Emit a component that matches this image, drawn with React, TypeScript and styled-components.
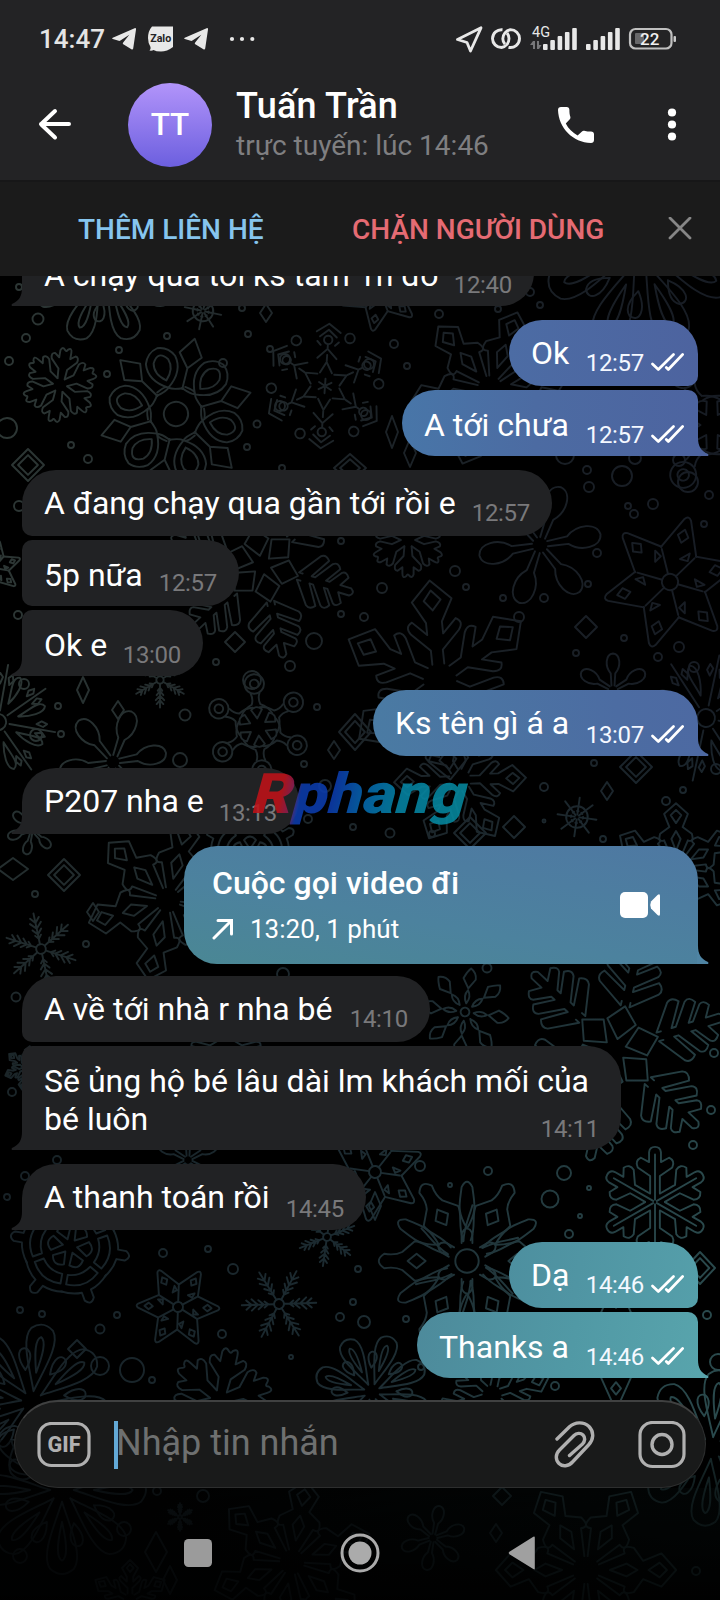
import React from "react";
import styled, { createGlobalStyle, css } from "styled-components";

const GlobalStyle = createGlobalStyle`
  * { box-sizing: border-box; }
  html, body { margin: 0; padding: 0; background: #000; }
  body { font-family: Roboto, "Noto Sans", sans-serif; color: #fff; }
  svg { display: block; flex: none; }
`;

const Screen = styled.main`
  position: relative;
  width: 720px;
  height: 1600px;
  overflow: hidden;
  background: #000;
  display: flex;
  flex-direction: column;
`;

/* ---------- top area ---------- */

const Top = styled.header`
  position: relative;
  flex: none;
  height: 180px;
  background: #232325;
  display: flex;
  flex-direction: column;
`;

const StatusBar = styled.div`
  height: 77px;
  padding: 0 44px 0 39px;
  display: flex;
  align-items: center;
  color: #e8e8e8;
`;

const Clock = styled.span`
  font-size: 26px;
  line-height: 30px;
  font-weight: 500;
  width: 73px;
  color: #e4e4e4;
`;

const StatusIcons = styled.div<{ $push?: boolean }>`
  display: flex;
  align-items: center;
  margin-left: ${(p) => (p.$push ? "auto" : "0")};
`;

const ZaloIcon = styled.svg`
  margin: 0 11px 0 12px;
`;

const MoreDots = styled.svg`
  margin-left: 21px;
`;

const TitleRow = styled.div`
  height: 96px;
  display: flex;
  align-items: center;
  padding: 0 24px 0 31px;
`;

const Avatar = styled.div`
  width: 84px;
  height: 84px;
  margin-left: 49px;
  padding-bottom: 2px;
  border-radius: 50%;
  background: linear-gradient(#b294fa, #6c5fdf);
  display: flex;
  align-items: center;
  justify-content: center;
  font-size: 31.5px;
  font-weight: 500;
`;

const Person = styled.div`
  margin-left: 24px;
  flex: 1;
  white-space: nowrap;
`;

const PersonName = styled.div`
  font-size: 36px;
  line-height: 40px;
  font-weight: 500;
  letter-spacing: 0.2px;
`;

const PersonState = styled.div`
  font-size: 28px;
  line-height: 34px;
  margin-top: 3px;
  padding-bottom: 1px;
  color: #7f7f81;
`;

const MenuDots = styled.svg`
  margin-left: 48px;
`;

const ActionBar = styled.nav`
  position: relative;
  flex: none;
  height: 96px;
  background: #1b1b1b;
  display: flex;
  align-items: center;
  padding: 0 28px 0 78px;
  border-top: 2px solid #171718;
`;

const Action = styled.button<{ $color: string; $width: number }>`
  border: 0;
  padding: 2px 0 0;
  background: none;
  text-align: left;
  font: 500 28px/34px Roboto, sans-serif;
  white-space: nowrap;
  color: ${(p) => p.$color};
  width: ${(p) => p.$width}px;
`;

const CloseIcon = styled.svg`
  margin-left: auto;
`;

/* ---------- wallpaper ---------- */

const Wallpaper = styled.svg`
  position: absolute;
  left: 0;
  top: 276px;
`;

const K = "non-scaling-stroke";

type Kind =
  | "chunk" | "branch" | "loops" | "filigree" | "dashes" | "fishbone" | "squares" | "knobs"
  | "petals" | "feather" | "star" | "burst" | "wheel" | "helm" | "kites" | "grand" | "clover";

interface Arm {
  n: number;
  d: string;
  /** drawn half a step between two arms */
  between?: string;
  dots?: [number, number, number][];
  core?: number;
}

const arms: Record<Kind, Arm> = {
  chunk: {
    n: 6,
    d: "M-9-16L-11-40L-32-62Q-36-76-26-77L-14-68V-86Q-10-98-2-88Q2-84 4-90Q14-98 14-84V-68L26-77Q36-76 32-62L11-40L9-16",
  },
  branch: {
    n: 6,
    d: "M0-4V-88M-9-16V-48L-32-64Q-38-76-26-82L-11-74V-92Q-10-102 0-102Q10-102 11-92V-74L26-82Q38-76 32-64L9-48V-16",
  },
  loops: {
    n: 6,
    core: 16,
    d: "M-18-30Q-4-32 0-36Q4-32 18-30M-16-34Q-3-40 0-36Q-24-52-20-74Q-14-88 0-90Q14-88 20-74Q24-52 0-36M0-46Q-14-58-10-72Q0-88 10-72Q14-58 0-46",
    between: "M0-34V-62M0-62L-15-80L0-102L15-80Z",
  },
  filigree: {
    n: 6,
    core: 13,
    d: "M-6-20V-30Q-4-36 0-36Q4-36 6-30V-20M0-36C12-56 8-64 6-82Q0-94-6-82C-8-64-12-56 0-36M-4-22C-3-40 3-50 6-62",
    between: "M-8-22C-10-38-22-48-22-58L-10-72Q-6-80-8-92Q0-104 8-92Q6-80 10-72L22-58C22-48 10-38 8-22M0-46L-8-56L0-66L8-56Z",
  },
  dashes: {
    n: 6,
    d: "M0-2V-12M-10-22L0-40L10-22M-16-46L0-62L16-46M0-52V-42M-20-90L0-104L20-90M-14-82L0-94L14-82M-12-68L-18-74M12-68L18-74M0-62V-68",
    dots: [[0, -77, 7], [36, -82, 8]],
  },
  fishbone: {
    n: 6,
    d: "M0-10L-13-26L0-40L13-26ZM-4-44V-40L-27-57Q-31-62-25-67L-4-54V-58L-23-72Q-27-77-20-81L-4-70V-74L-17-84Q-20-88-14-92L-4-86V-98Q0-104 4-98V-86L14-92Q20-88 17-84L4-74V-70L20-81Q27-77 23-72L4-58V-54L25-67Q31-62 27-57L4-40V-44",
  },
  squares: {
    n: 6,
    d: "M-6-16L-6-30L-24-48Q-30-56-22-60L-8-46V-58L-20-80L0-100L20-80L8-58V-46L22-60Q30-56 24-48L6-30V-16M-8-80L0-90L9-80L0-70Z",
  },
  grand: {
    n: 6,
    d: "M-6-14L-18-42Q-28-38-24-52L-10-62L-18-82L0-98L18-82L10-62L24-52Q28-38 18-42L6-14M0-68L-8-80L0-88L8-80ZM0-26L-7-44L0-56L7-44Z",
  },
  knobs: {
    n: 6,
    d: "M-8-62Q-4-52-8-42Q-22-36-28-24M8-62Q4-52 8-42Q22-36 28-24M0-16L-10-32Q0-42 10-32Z",
    dots: [[0, -80, 18], [0, -80, 8]],
  },
  petals: {
    n: 8,
    d: "M0-14C-8-40-26-78-14-94Q0-106 14-94C26-78 8-40 0-14M0-38C-5-60-8-80 0-84C8-80 5-60 0-38M18-38C18-60 30-68 36-58C38-48 28-42 18-38",
  },
  feather: {
    n: 6,
    core: 13,
    d: "M0-14V-98M0-40L-12-54M0-40L12-54M0-56L-15-72M0-56L15-72M0-72L-12-86M0-72L12-86M0-28L-8-38M0-28L8-38",
  },
  star: {
    n: 6,
    core: 12,
    d: "M-27-46L-5-95Q0-102 5-95L27-46M0-60L-8-70L0-80L8-70Z",
    between: "M0-12V-50M-10-50L-14-34L-4-40Z",
  },
  burst: {
    n: 8,
    core: 14,
    d: "M0-20V-100M12-34C14-60 10-80 24-82C34-74 24-50 12-34M-8-66L-14-74L-11-84L-5-78ZM8-66L14-74L11-84L5-78Z",
  },
  wheel: { n: 8, core: 54, d: "M0-12V-50M0-60V-98M-4-30H4" },
  helm: {
    n: 6,
    d: "M-40-66Q-24-78-8-80V-94Q0-106 8-94V-80Q24-78 40-66M-28-58Q0-76 28-58L20-44Q0-54-20-44ZM0-12L-12-30Q0-44 12-30Z",
  },
  kites: {
    n: 8,
    core: 10,
    d: "M0-20Q-10-36 0-50Q10-36 0-20M0-54L-14-76Q-8-92 0-100Q14-92 14-76Z",
  },
  clover: { n: 6, d: "M-4-12L-6-44C-22-62-20-94 0-96C20-94 22-62 6-44L4-12" },
};

const flakes: [Kind, number, number, number, number][] = [
  ["petals", 103, 270, 74, 22], ["wheel", 203, 311, 19, 12], ["chunk", 60, 385, 40, 10], ["loops", 176, 414, 76, -16],
  ["dashes", 325, 386, 60, 4], ["grand", 490, 388, 82, 20], ["petals", 640, 250, 98, 22], ["knobs", 712, 425, 72, 30],
  ["fishbone", 262, 565, 94, 47], ["star", -6, 568, 28, 10], ["clover", 540, 545, 64, 20], ["star", 670, 582, 68, 16],
  ["chunk", 408, 540, 40, 0], ["squares", 440, 680, 100, -6], ["clover", 613, 690, 38, 0], ["star", 380, 290, 42, 10],
  ["burst", 706, 718, 64, 12], ["burst", -2, 722, 58, 10], ["feather", 160, 680, 28, 0], ["knobs", 258, 727, 54, -5],
  ["clover", 113, 762, 56, 20], ["grand", 168, 900, 84, 14], ["feather", 41, 949, 37, -12], ["wheel", 577, 817, 20, 8],
  ["grand", 676, 868, 66, 0], ["kites", 465, 1012, 44, 8], ["fishbone", 615, 1050, 112, 13], ["squares", 460, 780, 66, 28],
  ["clover", 32, 830, 26, 14], ["helm", 250, 855, 50, 0], ["squares", 226, 1040, 55, 0],
  ["helm", 70, 1246, 60, 40], ["star", 178, 1307, 42, -28], ["feather", 279, 1304, 38, 28], ["feather", 327, 1237, 30, 8],
  ["branch", 655, 1202, 54, 0], ["filigree", 467, 1261, 90, 0], ["star", 375, 1172, 50, 8], ["clover", 188, 1160, 35, 0],
  ["petals", 32, 1402, 78, 8], ["chunk", 220, 1400, 56, 12], ["petals", 372, 1392, 58, 18], ["star", 616, 1345, 62, 0],
  ["squares", 492, 1395, 60, 12], ["petals", 712, 1448, 78, 6], ["petals", 62, 1490, 84, 0], ["feather", 180, 1517, 14, 0],
  ["grand", 292, 1562, 84, 10], ["clover", 433, 1538, 34, 12], ["grand", 586, 1570, 92, 30], ["squares", 130, 1600, 40, 0],
  ["squares", 26, 1068, 22, 10],
];

const rings: [number, number, number][] = [
  [19, 287, 3], [38, 319, 5.5], [26, 338, 4], [9, 361, 4], [119, 350, 3], [167, 336, 3], [107, 374, 3], [223, 363, 4],
  [242, 308, 3], [248, 334, 3], [270, 349, 3], [285, 359, 5], [280, 406, 5], [257, 424, 3.5], [247, 447, 3], [71, 445, 3],
  [88, 459, 4], [7, 428, 10], [282, 468, 3], [19, 506, 5], [18, 615, 4], [314, 641, 8], [290, 666, 5], [216, 662, 3],
  [341, 541, 3], [341, 614, 3], [252, 680, 9], [530, 292, 4], [540, 305, 3], [439, 314, 4], [498, 309, 3], [394, 344, 4],
  [369, 364, 5], [407, 366, 3], [366, 415, 5], [565, 455, 9], [587, 470, 4], [589, 487, 5], [622, 476, 10], [635, 458, 6],
  [688, 482, 10], [679, 460, 6], [653, 504, 5], [628, 506, 3], [634, 514, 4], [709, 495, 4], [704, 524, 3], [455, 571, 5],
  [466, 587, 3], [382, 588, 5], [503, 598, 3], [544, 598, 4], [519, 617, 5], [597, 553, 4], [588, 584, 3], [364, 617, 4],
  [624, 638, 3], [576, 653, 3], [679, 647, 5], [658, 657, 4], [694, 667, 5], [24, 684, 5], [58, 706, 3], [61, 734, 3],
  [36, 735, 6], [185, 715, 5.5], [180, 760, 7], [317, 707, 3], [304, 764, 3], [325, 786, 6], [308, 819, 4], [353, 827, 3],
  [35, 894, 3], [86, 944, 3], [16, 997, 4.5], [283, 974, 6], [487, 968, 4.5], [594, 763, 3], [544, 787, 4], [390, 833, 4.5],
  [432, 834, 3], [544, 821, 1.5], [603, 839, 3], [666, 801, 4], [683, 790, 3], [716, 769, 5], [12, 1092, 4], [57, 1160, 4],
  [25, 1176, 4], [7, 1197, 3], [163, 1253, 4], [208, 1249, 3], [233, 1269, 5], [20, 1310, 3], [42, 1314, 3], [117, 1315, 3],
  [100, 1329, 4.5], [222, 1334, 4], [340, 1317, 4], [353, 1302, 3], [358, 1269, 3], [291, 1357, 2], [420, 1166, 5],
  [488, 1171, 4], [450, 1185, 2], [564, 1173, 7], [550, 1199, 8.5], [589, 1188, 2], [580, 1216, 2], [569, 1234, 4],
  [693, 1145, 4], [711, 1110, 4], [714, 1053, 4], [364, 1322, 6], [406, 1319, 3], [707, 1315, 4], [718, 1362, 8],
  [100, 1366, 9], [132, 1370, 12], [421, 1367, 3], [555, 1386, 4], [152, 1380, 3], [203, 1496, 6], [157, 1491, 4],
  [124, 1529, 7], [20, 1556, 7], [696, 1571, 4],
];

const diamonds: [number, number, number, number, boolean][] = [
  [28, 465, 16, 16, true], [350, 468, 16, 14, true], [266, 313, 6, 9, false], [392, 432, 6, 16, false], [410, 453, 6, 14, false],
  [235, 642, 10, 10, false], [586, 627, 11, 11, false], [83, 690, 6, 13, false], [118, 710, 6, 9, false], [334, 750, 6, 9, false],
  [355, 732, 16, 18, true], [13, 869, 15, 11, false], [64, 875, 16, 16, true], [93, 912, 6, 9, false], [470, 833, 16, 16, true],
  [514, 827, 11, 11, false], [636, 767, 16, 16, true], [607, 791, 6, 9, false], [375, 1206, 6, 14, false], [700, 1268, 15, 16, true],
  [77, 1349, 9, 9, false], [156, 1552, 11, 20, false], [170, 1580, 7, 14, false], [496, 1533, 6, 9, false], [502, 1496, 9, 9, false],
];

function Flake({ kind, x, y, r, turn }: { kind: Kind; x: number; y: number; r: number; turn: number }) {
  const arm = arms[kind];
  const step = 360 / arm.n;
  return (
    <g transform={`translate(${x} ${y}) rotate(${turn}) scale(${r / 100})`}>
      {arm.core && <circle r={arm.core} vectorEffect={K} />}
      {Array.from({ length: arm.n }, (_, i) => (
        <g key={i} transform={`rotate(${step * i})`}>
          <path d={arm.d} vectorEffect={K} />
          {arm.between && <path d={arm.between} transform={`rotate(${step / 2})`} vectorEffect={K} />}
          {arm.dots?.map(([cx, cy, cr], j) => <circle key={j} cx={cx} cy={cy} r={cr} vectorEffect={K} />)}
        </g>
      ))}
    </g>
  );
}

function SnowPattern() {
  return (
    <Wallpaper width="720" height="1324" viewBox="0 276 720 1324" aria-hidden="true">
      <defs>
        <linearGradient id="tint" x1="0" y1="0" x2="1" y2="0">
          <stop offset="0" stopColor="#2d3735" />
          <stop offset=".45" stopColor="#1d2428" />
          <stop offset="1" stopColor="#171c24" />
        </linearGradient>
        <linearGradient id="tintLow" x1="0" y1="0" x2="1" y2="0">
          <stop offset="0" stopColor="#172126" />
          <stop offset=".5" stopColor="#1c2b31" />
          <stop offset="1" stopColor="#2a4a4d" />
        </linearGradient>
        <linearGradient id="downward" x1="0" y1="0" x2="0" y2="1">
          <stop offset=".3" stopColor="#000" />
          <stop offset=".68" stopColor="#fff" />
        </linearGradient>
        <linearGradient id="shade" x1="0" y1="0" x2="0" y2="1">
          <stop offset="0" stopColor="#000" stopOpacity=".4" />
          <stop offset=".5" stopColor="#000" stopOpacity=".72" />
          <stop offset="1" stopColor="#000" stopOpacity=".84" />
        </linearGradient>
        <radialGradient id="glow" cx="1" cy=".35" r=".8">
          <stop offset="0" stopColor="#071010" />
          <stop offset="1" stopColor="#020303" />
        </radialGradient>
        <mask id="lower" maskUnits="userSpaceOnUse" x="0" y="276" width="720" height="1324">
          <rect y="276" width="720" height="1324" fill="url(#downward)" />
        </mask>
        <mask id="snow" maskUnits="userSpaceOnUse" x="0" y="276" width="720" height="1324">
          <g fill="none" stroke="#fff" strokeWidth="1.9" strokeLinecap="round" strokeLinejoin="round">
            {flakes.map(([kind, x, y, r, turn], i) => <Flake key={i} kind={kind} x={x} y={y} r={r} turn={turn} />)}
            {rings.map(([x, y, r], i) => <circle key={i} cx={x} cy={y} r={r} />)}
            {diamonds.map(([x, y, w, h, twice], i) => (
              <g key={i}>
                <path d={`M${x} ${y - h}L${x + w} ${y}L${x} ${y + h}L${x - w} ${y}Z`} />
                {twice && <path d={`M${x} ${y - h * 0.62}L${x + w * 0.62} ${y}L${x} ${y + h * 0.62}L${x - w * 0.62} ${y}Z`} />}
              </g>
            ))}
          </g>
        </mask>
      </defs>
      <rect y="1488" width="720" height="112" fill="url(#glow)" />
      <g mask="url(#snow)">
        <rect y="276" width="720" height="1324" fill="url(#tint)" />
        <rect y="276" width="720" height="1324" fill="url(#tintLow)" mask="url(#lower)" />
      </g>
      <rect y="1440" width="720" height="160" fill="url(#shade)" />
    </Wallpaper>
  );
}

/* ---------- messages ---------- */

const Chat = styled.section`
  position: relative;
  flex: none;
  height: 1124px;
  overflow: hidden;
  display: flex;
  flex-direction: column;
  padding: 0 22px;
`;

type Side = "in" | "out";

const Bubble = styled.article<{
  $side: Side; $gap: number; $joinTop?: boolean; $joinBottom?: boolean; $tail?: boolean; $fill: string; $w: number; $h: number;
}>`
  position: relative;
  flex: none;
  display: flex;
  align-items: flex-start;
  width: ${(p) => p.$w}px;
  height: ${(p) => p.$h}px;
  margin-top: ${(p) => p.$gap}px;
  align-self: ${(p) => (p.$side === "in" ? "flex-start" : "flex-end")};
  background: ${(p) => p.$fill};
  padding: ${(p) => (p.$joinTop ? 16 : 14)}px ${(p) => (p.$side === "in" ? 22 : 14)}px 0 22px;
  ${(p) => {
    const top = p.$joinTop ? 10 : 34;
    const bottom = p.$tail ? 0 : p.$joinBottom ? 10 : 34;
    return p.$side === "in"
      ? css`border-radius: ${top}px 33px 33px ${bottom}px;`
      : css`border-radius: 33px ${top}px ${bottom}px 33px;`;
  }}
`;

const TailShape = styled.svg<{ $side: Side }>`
  position: absolute;
  bottom: 0;
  ${(p) => (p.$side === "in" ? "left: -11px;" : "right: -11px; transform: scaleX(-1);")}
`;

const Words = styled.p`
  margin: 0;
  min-width: 0;
  font-size: 32px;
  line-height: 38px;
  white-space: pre;
`;

const Meta = styled.div<{ $side: Side; $tail?: boolean }>`
  margin-left: auto;
  align-self: flex-end;
  display: flex;
  align-items: center;
  gap: 7px;
  font-size: 24px;
  line-height: 28px;
  letter-spacing: -0.3px;
  padding-bottom: ${(p) => (p.$tail ? 7 : 9)}px;
  color: ${(p) => (p.$side === "in" ? "#79797b" : "#f4f8ff")};
`;

function Tail({ side, color }: { side: Side; color: string }) {
  return (
    <TailShape $side={side} width="12" height="18" viewBox="0 0 12 18">
      <path d="M12 0H11C11 8 8 13 1 16Q0 17 1 18H12Z" fill={color} />
    </TailShape>
  );
}

function Ticks() {
  return (
    <svg width="33" height="20" viewBox="0 0 33 20" fill="none" stroke="#fff" strokeWidth="2.7" strokeLinecap="round" strokeLinejoin="round">
      <path d="M1.500 11L7.300 16.500L22.500 1.500M15.300 14.500L17.300 16.500L31.600 1.500" />
    </svg>
  );
}

interface Message {
  side: Side; text: string; time: string; gap: number; w: number; h?: number;
  joinTop?: boolean; joinBottom?: boolean; tail?: boolean; fill?: string; tailColor?: string;
}

function MessageBubble({ m }: { m: Message }) {
  const fill = m.fill ?? "#212224";
  return (
    <Bubble $side={m.side} $gap={m.gap} $joinTop={m.joinTop} $joinBottom={m.joinBottom} $tail={m.tail} $fill={fill} $w={m.w} $h={m.h ?? 66}>
      <Words>{m.text}</Words>
      <Meta $side={m.side} $tail={m.tail}>
        {m.time}
        {m.side === "out" && <Ticks />}
      </Meta>
      {m.tail && <Tail side={m.side} color={m.tailColor ?? fill} />}
    </Bubble>
  );
}

const before: Message[] = [
  { side: "in", text: "A chạy qua tới ks tầm 1h đó", time: "12:40", gap: -36, w: 512, joinTop: true, tail: true },
  { side: "out", text: "Ok", time: "12:57", gap: 14, w: 189, joinBottom: true, fill: "linear-gradient(90deg, #4c6ca4, #4d639f)" },
  { side: "out", text: "A tới chưa", time: "12:57", gap: 4, w: 296, joinTop: true, tail: true, fill: "linear-gradient(90deg, #4876a8, #4c6ba2 45%, #4d64a0)", tailColor: "#4d64a0" },
  { side: "in", text: "A đang chạy qua gần tới rồi e", time: "12:57", gap: 14, w: 530, joinBottom: true },
  { side: "in", text: "5p nữa", time: "12:57", gap: 4, w: 217, joinTop: true, joinBottom: true },
  { side: "in", text: "Ok e", time: "13:00", gap: 4, w: 181, joinTop: true, tail: true },
  { side: "out", text: "Ks tên gì á a", time: "13:07", gap: 14, w: 325, tail: true, fill: "linear-gradient(80deg, #4a7ba3, #4c6ca2 75%, #4d69a2)", tailColor: "#4d69a2" },
  { side: "in", text: "P207 nha e", time: "13:13", gap: 12, w: 277, tail: true },
];

const after: Message[] = [
  { side: "in", text: "A về tới nhà r nha bé", time: "14:10", gap: 12, w: 408, joinBottom: true },
  { side: "in", text: "Sẽ ủng hộ bé lâu dài lm khách mối của\nbé luôn", time: "14:11", gap: 4, w: 599, h: 104, joinTop: true, tail: true },
  { side: "in", text: "A thanh toán rồi", time: "14:45", gap: 14, w: 344, tail: true },
  { side: "out", text: "Dạ", time: "14:46", gap: 12, w: 189, joinBottom: true, fill: "linear-gradient(100deg, #4d8f9f, #559faa)" },
  { side: "out", text: "Thanks a", time: "14:46", gap: 4, w: 281, joinTop: true, tail: true, fill: "linear-gradient(100deg, #4d8a9b, #5199a5 55%, #58a4ac)", tailColor: "#58a4ac" },
];

const CallBody = styled.div`
  flex: 1;
  display: flex;
  flex-direction: column;
  padding: 4px 0 0 6px;
`;

const CallTitle = styled.div`
  font-size: 32px;
  line-height: 38px;
  font-weight: 500;
`;

const CallInfo = styled.div`
  display: flex;
  align-items: center;
  gap: 16px;
  margin-top: 12px;
  font-size: 26px;
  line-height: 30px;
`;

const CallIcon = styled.div`
  align-self: center;
  margin: -14px 24px 0 0;
`;

const BrandStamp = styled.div`
  position: absolute;
  z-index: 3;
  left: 254px;
  top: 762px;
  font: italic 900 56px/64px Roboto, sans-serif;
  transform: scaleX(1.14) skewX(-4deg);
  transform-origin: 0 50%;
  opacity: 0.88;
  background: linear-gradient(97deg, #c01218 0 14%, #8c1c50 19%, #0c3dae 23% 38%, #0568b0 52%, #0585a5 68%, #068a9f);
  background-clip: text;
  -webkit-background-clip: text;
  color: transparent;
`;

/* ---------- bottom area ---------- */

const Composer = styled.form`
  position: relative;
  flex: none;
  height: 88px;
  margin: 0 14px;
  border-radius: 44px;
  border: 1px solid #2d2e2e;
  border-top: 2px solid #404141;
  background: #191a1a;
  display: flex;
  align-items: center;
  padding: 0 19px 0 22px;
`;

const Field = styled.div`
  display: flex;
  align-items: center;
  margin-left: 23px;
  flex: 1;
  white-space: nowrap;
  font-size: 36px;
  line-height: 42px;
  color: #6e7070;
`;

const Caret = styled.span`
  width: 4px;
  height: 48px;
  margin-right: -2px;
  background: #63a9d6;
`;

const Placeholder = styled.span`
  padding-bottom: 4px;
`;

const ClipIcon = styled.svg`
  margin-right: -1px;
`;

const CameraIcon = styled.svg`
  margin-left: 43px;
`;

const NavBar = styled.footer`
  position: relative;
  flex: 1;
  display: flex;
  align-items: center;
  padding: 18px 184px 0;
  justify-content: space-between;
`;

const Plane = () => (
  <svg width="24" height="22" viewBox="0 0 24 22" fill="#e8e8e8">
    <path d="M.8 9.7L22.6.2Q24.2-.2 24 1.4L21.2 20.4Q20.8 22 19.4 21.2L11.3 16.2Q10.4 15.5 11.2 14.6L17.3 6.8L8.4 12.6Q7.6 13.1 6.7 12.8L.8 11.1Q-.4 10.4.8 9.7Z" />
  </svg>
);

const Bars = () => (
  <svg width="34" height="24" viewBox="0 0 34 24" fill="#e8e8e8">
    {[6, 10, 14, 18, 22].map((h, i) => <rect key={h} x={i * 7.3} y={23 - h} width="4.6" height={h} rx="1" />)}
  </svg>
);

export default function App() {
  return (
    <>
      <GlobalStyle />
      <Screen>
        <SnowPattern />
        <Top>
          <StatusBar>
            <Clock>14:47</Clock>
            <StatusIcons>
              <Plane />
              <ZaloIcon width="25" height="26" viewBox="0 0 25 26">
                <path d="M4 .5H25V21Q19 25.500 13 25.500Q8 25.500 5.500 24Q4 25 1.500 24.500Q3 23 2.500 21Q0 17 0 12Q0 5 4 .5Z" fill="#e8e8e8" />
                <text x="12.700" y="16" textAnchor="middle" fontFamily="Roboto" fontWeight="700" fontSize="10.500" textLength="21" lengthAdjust="spacingAndGlyphs" fill="#232325">Zalo</text>
              </ZaloIcon>
              <Plane />
              <MoreDots width="26" height="6" viewBox="0 0 26 6" fill="#e8e8e8">
                <circle cx="3" cy="3" r="2.100" /><circle cx="13" cy="3" r="2.100" /><circle cx="23.300" cy="3" r="2.100" />
              </MoreDots>
            </StatusIcons>
            <StatusIcons $push>
              <svg width="220" height="30" viewBox="456 24 220 30" fill="none" stroke="#e8e8e8">
                <path d="M457.500 39.500L481 27.800L470.500 51L467 42.500Z" strokeWidth="2.800" strokeLinejoin="round" />
                <g strokeWidth="2.900" strokeLinecap="butt">
                  <path d="M502.500 29.800A9 9 0 0 0 492.500 38.500A9 9 0 0 0 501.500 47.500C506 46.800 509 43 509 38.500Q509 35.500 507 33" />
                  <path d="M508.500 47.300A9 9 0 0 0 519.500 38.500A9 9 0 0 0 510.500 29.600C506 30.500 502.800 34.500 502.800 38.800Q502.800 41.800 505 44.200" />
                </g>
                <g stroke="none">
                  <text x="532" y="37" fontFamily="Roboto" fontSize="14.500" fill="#e8e8e8">4G</text>
                  <path d="M533 41V49H535V41ZM530 45L533 41V45ZM537 41V49H539V41ZM539 49L541.500 45H539Z" fill="#77777a" />
                  <g transform="translate(543 27)"><Bars /></g>
                  <g transform="translate(586 27)"><Bars /></g>
                  <rect x="635" y="33" width="9" height="11" rx="1" fill="#68686a" />
                  <rect x="673.500" y="36" width="2.500" height="6" rx="1" fill="#c8c8c8" />
                  <text x="640" y="45" fontFamily="Roboto" fontWeight="500" fontSize="17" fill="#f0f0f0">22</text>
                </g>
                <rect x="630" y="29" width="41.500" height="19.500" rx="5.500" strokeWidth="2.200" stroke="#c0c0c0" />
              </svg>
            </StatusIcons>
          </StatusBar>
          <TitleRow>
            <svg width="48" height="48" viewBox="0 0 48 48" fill="none" stroke="#fff" strokeWidth="4" strokeLinecap="round" strokeLinejoin="round">
              <path d="M38 23H10M24 10L10 23.200L24 36.500" />
            </svg>
            <Avatar>TT</Avatar>
            <Person>
              <PersonName>Tuấn Trần</PersonName>
              <PersonState>trực tuyến: lúc 14:46</PersonState>
            </Person>
            <svg width="48" height="48" viewBox="0 0 24 24" fill="#fff">
              <path d="M7.300 3C8.200 3 8.700 3.600 8.700 4.500C8.700 5.700 8.800 6.900 9.200 8C9.300 8.400 9.200 8.800 8.900 9.100L6.900 11.300C8.200 13.900 10.200 15.900 12.800 17.200L15 15.200C15.300 14.900 15.700 14.800 16.100 14.900C17.200 15.200 18.300 15.300 19.500 15.300C20.400 15.300 21 15.800 21 16.700V19.500C21 20.500 20.400 21 19.500 21C10.400 20.700 3.300 13.600 3 4.500C3 3.600 3.500 3 4.500 3Z" />
            </svg>
            <MenuDots width="48" height="48" viewBox="0 0 48 48" fill="#fff">
              <circle cx="24" cy="11.500" r="4.100" /><circle cx="24" cy="23.500" r="4.100" /><circle cx="24" cy="35.500" r="4.100" />
            </MenuDots>
          </TitleRow>
        </Top>
        <ActionBar>
          <Action $color="#86c5ee" $width={274}>THÊM LIÊN HỆ</Action>
          <Action $color="#e56b73" $width={251}>CHẶN NGƯỜI DÙNG</Action>
          <CloseIcon width="24" height="24" viewBox="0 0 24 24" stroke="#868686" strokeWidth="2.800" strokeLinecap="round">
            <path d="M2 1L22 21M22 1L2 21" />
          </CloseIcon>
        </ActionBar>
        <Chat>
          {before.map((m, i) => <MessageBubble key={i} m={m} />)}
          <Bubble $side="out" $gap={12} $tail $w={514} $h={118} $fill="linear-gradient(10deg, #4a8794, #4c829e 40%, #4e78a2)">
            <CallBody>
              <CallTitle>Cuộc gọi video đi</CallTitle>
              <CallInfo>
                <svg width="22" height="22" viewBox="0 0 22 22" fill="none" stroke="#fff" strokeWidth="3">
                  <path d="M2 20L19 3M6 2.500H19.500V16" strokeLinecap="round" />
                </svg>
                13:20, 1 phút
              </CallInfo>
            </CallBody>
            <CallIcon>
              <svg width="40" height="26" viewBox="0 0 40 26" fill="#fff">
                <rect width="28" height="26" rx="5" />
                <path d="M31 9.500L37.500 3Q40 1 40 4V22Q40 25 37.500 23L31 16.500Q29.500 13 31 9.500Z" />
              </svg>
            </CallIcon>
            <Tail side="out" color="#4f84a3" />
          </Bubble>
          {after.map((m, i) => <MessageBubble key={i} m={m} />)}
        </Chat>
        <BrandStamp>Rphang</BrandStamp>
        <Composer>
          <svg width="54" height="46" viewBox="0 0 54 46">
            <rect x="2" y="1.500" width="50" height="42" rx="12.500" fill="none" stroke="#b0b0b0" strokeWidth="3.200" />
            <text x="27" y="30" textAnchor="middle" fontFamily="Roboto" fontWeight="800" fontSize="22" textLength="33" lengthAdjust="spacingAndGlyphs" fill="#b0b0b0">GIF</text>
          </svg>
          <Field><Caret /><Placeholder>Nhập tin nhắn</Placeholder></Field>
          <ClipIcon width="42" height="48" viewBox="0 0 42 48" fill="none" stroke="#b0b0b0" strokeWidth="3.400" strokeLinecap="round" strokeLinejoin="round">
            <path d="M3 18L15.500 5.800C21 .9 29.500 .3 35 5.500C40.500 11 39.500 19 34.500 24L18.500 41C14.500 45.500 8.500 46 5 42.500C1.200 38.800 1.500 33 5.500 29L20 14.500C22.500 12 26.500 11.500 29 14C31.500 16.500 31 20.500 28.500 23L15.500 34.500" />
          </ClipIcon>
          <CameraIcon width="48" height="48" viewBox="0 0 48 48" fill="none" stroke="#b0b0b0" strokeWidth="3.200">
            <rect x="2" y="1.500" width="44" height="44" rx="12.500" /><circle cx="24" cy="23.500" r="10" strokeWidth="3.400" />
          </CameraIcon>
        </Composer>
        <NavBar>
          <svg width="28" height="28" viewBox="0 0 28 28"><rect width="28" height="28" rx="4.500" fill="#9b9b9b" /></svg>
          <svg width="40" height="40" viewBox="0 0 40 40">
            <circle cx="20" cy="20" r="18" fill="none" stroke="#ababab" strokeWidth="3" /><circle cx="20" cy="20" r="11.500" fill="#ababab" />
          </svg>
          <svg width="28" height="34" viewBox="0 0 28 34"><path d="M26.800 1.500V32.500Q26.800 34 25.300 33L1.400 18.200Q0 17 1.400 15.800L25.300 .8Q26.800 .2 26.800 1.500Z" fill="#a0a0a0" /></svg>
        </NavBar>
      </Screen>
    </>
  );
}
